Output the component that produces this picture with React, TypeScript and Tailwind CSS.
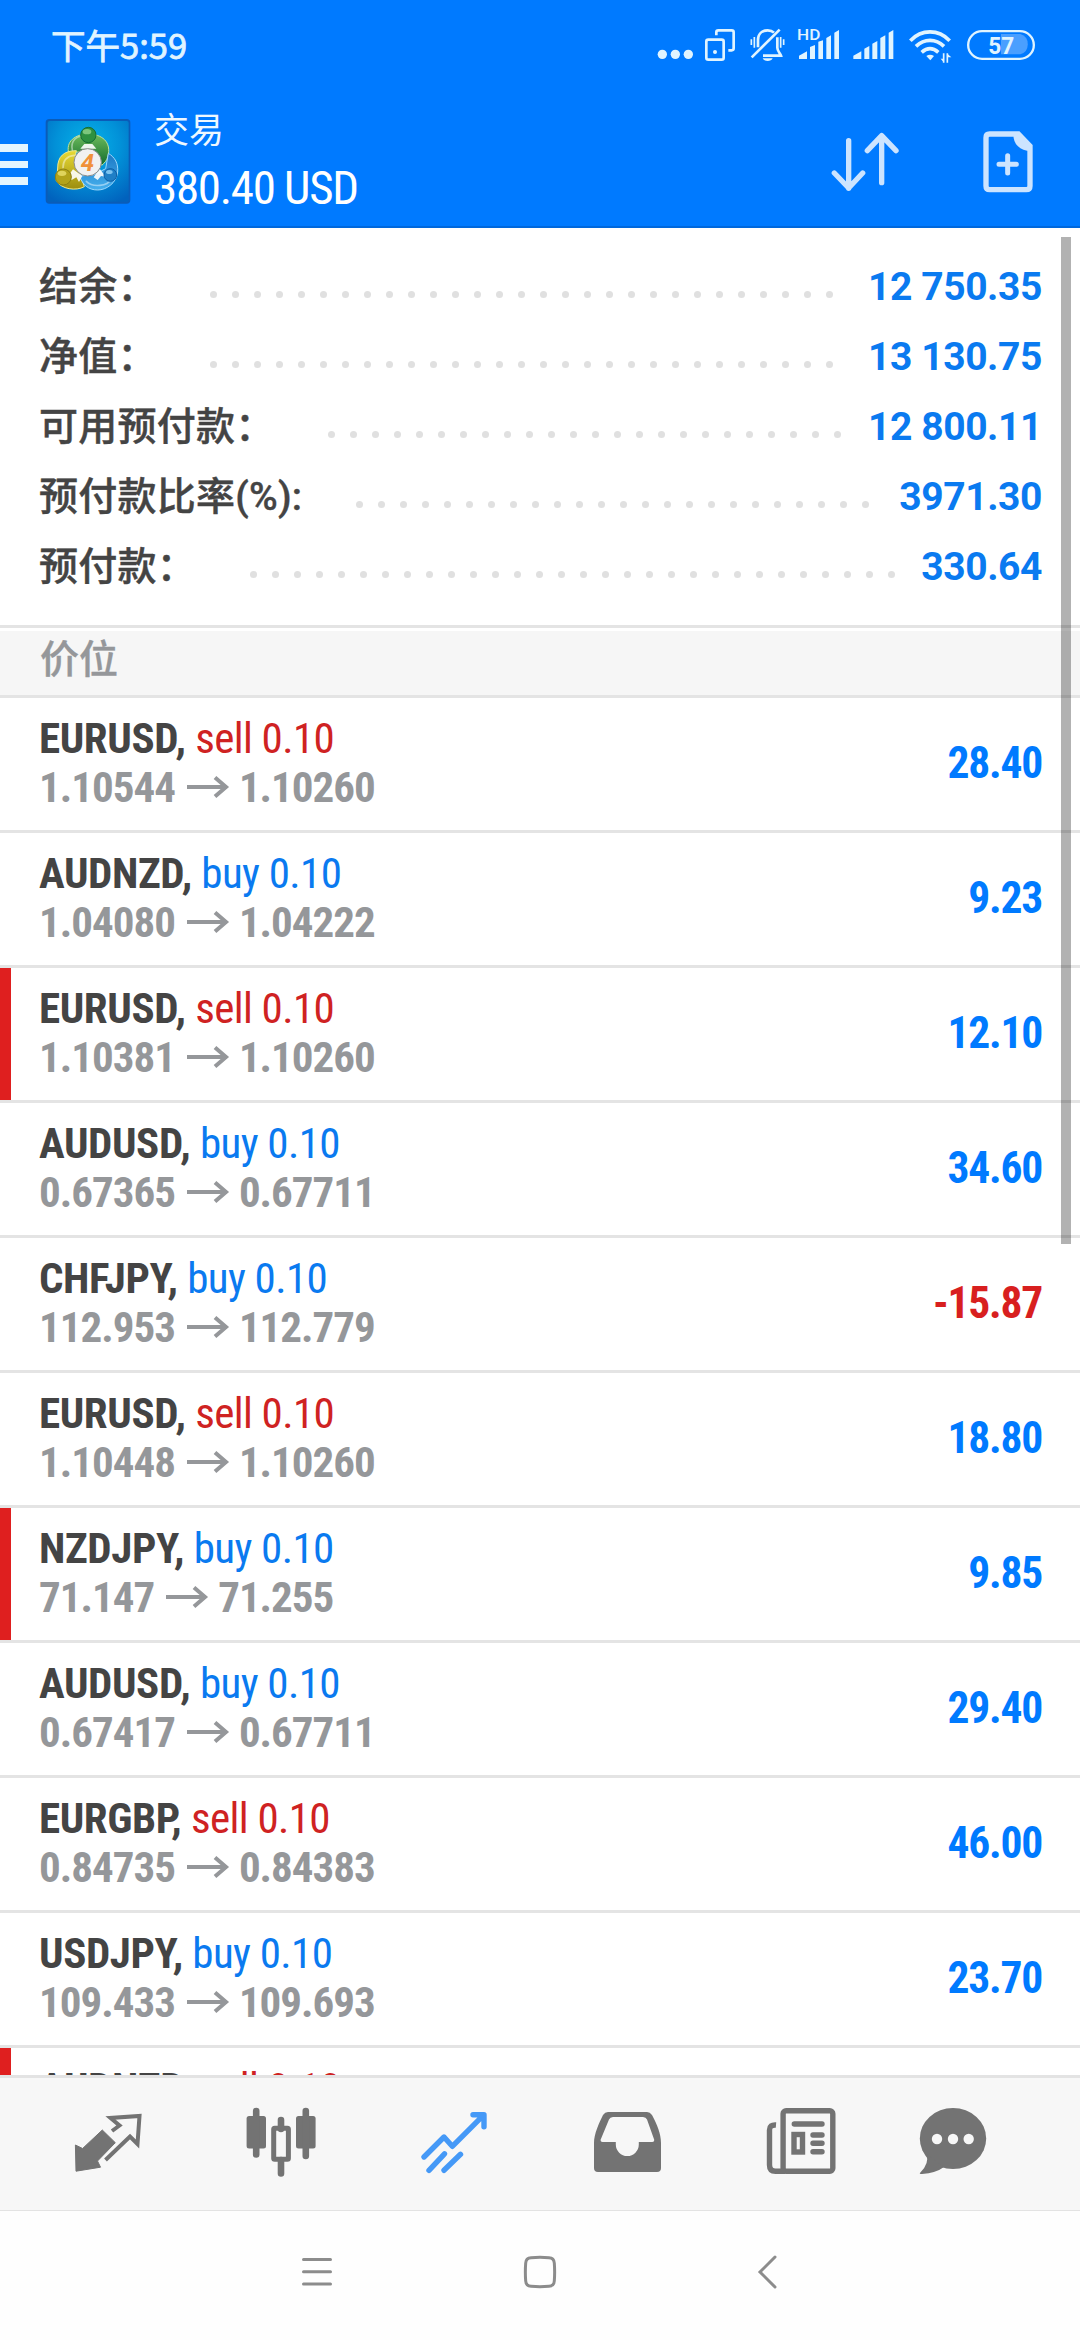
import type { ReactNode } from 'react'

const summary = [
  { label: '结余：', value: '12 750.35', dots: 29 },
  { label: '净值：', value: '13 130.75', dots: 29 },
  { label: '可用预付款：', value: '12 800.11', dots: 24 },
  { label: '预付款比率(%):', value: '3971.30', dots: 24 },
  { label: '预付款：', value: '330.64', dots: 30 },
]

const positions = [
  { symbol: 'EURUSD', side: 'sell', lots: '0.10', open: '1.10544', current: '1.10260', profit: '28.40' },
  { symbol: 'AUDNZD', side: 'buy', lots: '0.10', open: '1.04080', current: '1.04222', profit: '9.23' },
  { symbol: 'EURUSD', side: 'sell', lots: '0.10', open: '1.10381', current: '1.10260', profit: '12.10', marked: true },
  { symbol: 'AUDUSD', side: 'buy', lots: '0.10', open: '0.67365', current: '0.67711', profit: '34.60' },
  { symbol: 'CHFJPY', side: 'buy', lots: '0.10', open: '112.953', current: '112.779', profit: '-15.87' },
  { symbol: 'EURUSD', side: 'sell', lots: '0.10', open: '1.10448', current: '1.10260', profit: '18.80' },
  { symbol: 'NZDJPY', side: 'buy', lots: '0.10', open: '71.147', current: '71.255', profit: '9.85', marked: true },
  { symbol: 'AUDUSD', side: 'buy', lots: '0.10', open: '0.67417', current: '0.67711', profit: '29.40' },
  { symbol: 'EURGBP', side: 'sell', lots: '0.10', open: '0.84735', current: '0.84383', profit: '46.00' },
  { symbol: 'USDJPY', side: 'buy', lots: '0.10', open: '109.433', current: '109.693', profit: '23.70' },
  { symbol: 'AUDNZD', side: 'sell', lots: '0.10', open: '', current: '', profit: '', marked: true },
]

function StatusBar() {
  return (
    <div className="flex h-[91px] justify-between pl-[51px] pr-10 text-[#e0f4ff]">
      <div className="pt-[18.500px] text-[34.500px] leading-[50px] [-webkit-text-stroke:0.8px] font-['Noto_Sans_CJK_SC',sans-serif]">下午5:59</div>
      <div className="flex pt-[26px]">
        <svg width="44" height="40" viewBox="48 78 132 120" fill="currentColor">
          <circle cx="67" cy="163" r="14" />
          <circle cx="106" cy="163" r="14" />
          <circle cx="145" cy="163" r="14" />
        </svg>
        <svg width="43.34" height="40" viewBox="180 78 130 120" fill="none" stroke="currentColor" strokeWidth="8">
          <rect x="199" y="119" width="52" height="60" rx="6" />
          <path d="M229 106v-9q0-6 6-6h40q6 0 6 6v48q0 6-6 6h-10" />
          <circle cx="225" cy="156" r="6" fill="currentColor" stroke="none" />
        </svg>
        <svg width="46.66" height="40" viewBox="310 78 140 120" fill="none" stroke="currentColor" strokeWidth="8">
          <path d="M355 142v-22c0-18 12-29 29-29 8 0 14 2 19 7M413 112v31c0 10 9 17 11 24h-54" />
          <path d="M336 172l84-83" />
          <path d="M335 118v17M344 111v32M432 118v17M423 111v32" strokeWidth="5" />
          <path d="M369 175h30q-4 8-15 8t-15-8z" fill="currentColor" stroke="none" />
        </svg>
        <svg width="56.67" height="40" viewBox="450 78 170 120" fill="currentColor">
          <text x="471" y="120" fontSize="46" fontWeight="500" fontFamily="Roboto, sans-serif" textLength="70" lengthAdjust="spacingAndGlyphs">HD</text>
          <path d="M477 177v-10l24-13v23zM510 177v-36l15-6v42zM535 177v-52l14-4v56zM559 177v-63l14-8v71zM583 177v-79l14-8v87z" />
        </svg>
        <svg width="53.33" height="40" viewBox="620 78 160 120" fill="currentColor">
          <path d="M639 177v-10l24-13v23zM672 177v-31l15-8v39zM696 177v-46l15-8v54zM720 177v-63l15-8v71zM745 177v-79l14-8v87z" />
        </svg>
        <svg width="60" height="40" viewBox="780 78 180 120" fill="none" stroke="currentColor" strokeWidth="11">
          <path d="M811 122c34-35 84-35 118 0M828 139c25-24 59-24 84 0M845 157c16-14 34-14 50 0" />
          <path d="M859 168q11-8 23 0l-11 13z" fill="currentColor" stroke="none" />
          <path d="M911 160v28M922 188v-28" strokeWidth="5" />
          <path d="M902 176l9 11v-11zM934 172l-12-11v11z" fill="currentColor" stroke="none" />
        </svg>
        <svg width="80" height="40" viewBox="960 78 240 120">
          <path d="M1083 102h58a32 32 0 0 1 0 61h-58z" fill="#4a9fff" />
          <rect x="984.500" y="93.500" width="197" height="83" rx="41.500" fill="none" stroke="currentColor" strokeWidth="7" />
          <text x="1045" y="161" fill="currentColor" fontSize="72" fontWeight="700" fontFamily="Roboto, sans-serif" textLength="78" lengthAdjust="spacingAndGlyphs">57</text>
        </svg>
      </div>
    </div>
  )
}

function Logo() {
  return (
    <svg width="86" height="87" viewBox="0 0 258 261" className="ml-[17px]">
      <defs>
        <radialGradient id="tile" cx="0.5" cy="0.3" r="0.8">
          <stop offset="0" stopColor="#06b4ea" />
          <stop offset="0.5" stopColor="#0291d8" />
          <stop offset="1" stopColor="#0162bd" />
        </radialGradient>
        <linearGradient id="green" x1="0" y1="0" x2="0" y2="1">
          <stop offset="0" stopColor="#6fbd5c" />
          <stop offset="1" stopColor="#116b2e" />
        </linearGradient>
        <linearGradient id="yellow" x1="0" y1="0" x2="0" y2="1">
          <stop offset="0" stopColor="#e8da34" />
          <stop offset="1" stopColor="#9c8d10" />
        </linearGradient>
        <linearGradient id="sky" x1="0" y1="0" x2="0" y2="1">
          <stop offset="0" stopColor="#1c78c4" />
          <stop offset="1" stopColor="#46b0ee" />
        </linearGradient>
      </defs>
      <rect x="2" y="3" width="254" height="254" rx="11" fill="#0a5cb8" />
      <rect x="8" y="9" width="243" height="242" rx="6" fill="url(#tile)" />
      <g strokeLinejoin="round">
        <path d="M72 108C60 70 92 48 130 48s72 22 58 70c-2 8-10 18-18 24l-30-40H94z" fill="url(#green)" stroke="#c2e29a" strokeWidth="3" />
        <path d="M94 98C56 98 38 116 38 150c0 16-6 26-4 38 14 26 60 32 84 18l-16-48-14-28z" fill="url(#yellow)" stroke="#f1e98c" strokeWidth="3" />
        <path d="M190 106c20 12 30 30 28 56-4 34-34 54-60 54-28 0-46-16-54-42l44-4 34-18z" fill="url(#sky)" stroke="#9fd8fb" strokeWidth="3" />
      </g>
      <path d="M82 96c-6-30 14-42 34-42M54 150c0-22 12-36 34-38M124 190c20 20 64 14 74-6" fill="none" stroke="#fff" strokeOpacity="0.45" strokeWidth="5" strokeLinecap="round" />
      <path d="M68 176l16-22 28 20-10 18-8-14-14 8zM146 178l18-26 18 24-14-2-10 12zM106 92l12-14h24l12 14z" fill="#fff" opacity="0.9" />
      <circle cx="130" cy="51" r="23" fill="#2f9140" stroke="#176c33" strokeWidth="3" />
      <ellipse cx="126" cy="41" rx="13" ry="8" fill="#7cc67c" />
      <circle cx="55" cy="177" r="24" fill="#b3a31a" stroke="#8d7f12" strokeWidth="3" />
      <ellipse cx="51" cy="166" rx="13" ry="8" fill="#e0d45c" />
      <circle cx="196" cy="171" r="19" fill="#1f7fc6" stroke="#0d5da5" strokeWidth="3" />
      <ellipse cx="193" cy="162" rx="10" ry="6" fill="#7cc3f0" />
      <circle cx="128" cy="133" r="41" fill="#f1f1f1" stroke="#8c8c8c" strokeWidth="3" />
      <text x="127" y="158" textAnchor="middle" fontSize="72" fontWeight="700" fontStyle="italic" fill="#f0913a" fontFamily="Roboto, sans-serif">4</text>
    </svg>
  )
}

function Header() {
  return (
    <header className="h-[228px] border-b-2 border-[#0068dc] bg-[#007aff]">
      <StatusBar />
      <div className="flex h-[135px] items-start text-white">
        <div className="mt-[53px] flex w-7 flex-col gap-[9px]">
          <div className="h-[7.500px] bg-[#e3f5ff]" />
          <div className="h-[7.500px] bg-[#e3f5ff]" />
          <div className="h-[7.500px] bg-[#e3f5ff]" />
        </div>
        <div className="mt-[27px]">
          <Logo />
        </div>
        <div className="ml-[23px] flex flex-col">
          <div className="mt-[12px] text-[35px] leading-[50px] text-[#eef8ff] font-['Noto_Sans_CJK_SC',sans-serif]">交易</div>
          <div className="mt-[7px] text-[47px] leading-[56px] tracking-[-1.3px] [font-stretch:75%]">380.40 USD</div>
        </div>
        <div className="grow" />
        <svg width="68" height="60" viewBox="573 395 204 180" className="mt-[41px]" fill="none" stroke="#cce4ff" strokeWidth="16" strokeLinecap="round" strokeLinejoin="round">
          <path d="M626 421v143M583 518l43 45 42-45M725 547V406M682 451l43-45 43 45" />
        </svg>
        <svg width="50" height="62" viewBox="1030 394 150 186" className="mr-[47px] ml-[84px] mt-[40px]" fill="none" stroke="#cce4ff" strokeWidth="16">
          <path d="M1050 403h86l35 36v120q0 11-11 11h-110q-11 0-11-11V414q0-11 11-11z" />
          <path d="M1121 402h17l38 38v13h-14q-41-8-41-51z" fill="#cce4ff" stroke="none" />
          <path d="M1078 494h52M1104 468v52" strokeWidth="15" strokeLinecap="round" />
        </svg>
      </div>
    </header>
  )
}

function SummaryRow({ label, value, dots }: { label: string; value: string; dots: number }) {
  return (
    <div className="flex h-[70px] items-center">
      <div className="text-[39px] font-medium tracking-[0.25px] text-[#444] [-webkit-text-stroke:0.4px]">{label}</div>
      <div className="mt-[14px] ml-[53.500px] flex gap-[15px]">
        {Array.from({ length: dots }, (_, i) => (
          <span key={i} className="size-[7px] rounded-full bg-[#e0e0e0]" />
        ))}
      </div>
      <div className="ml-auto text-[39px] font-bold tracking-[-0.4px] text-[#0a7af0]">{value}</div>
    </div>
  )
}

function Position({ p }: { p: (typeof positions)[number] }) {
  return (
    <div className="flex h-[135px] shrink-0 border-b-[3px] border-[#e4e4e4]">
      <div className={p.marked ? 'w-[11px] bg-[#df1f1f]' : 'w-[11px]'} />
      <div className="ml-[28px] flex grow flex-col pt-[16px] text-[43px] leading-[48px] [font-stretch:75%]">
        <div className="tracking-[-0.6px] whitespace-pre">
          <span className="font-bold tracking-[-0.4px] text-[#444]">{p.symbol}, </span>
          <span className={p.side === 'sell' ? 'text-[#cf2222]' : 'text-[#0a7af0]'}>
            {p.side} {p.lots}
          </span>
        </div>
        {p.open && (
          <div className="mt-px flex items-center font-bold tracking-[-1px] text-[#95979a]">
            {p.open}
            <svg width="43" height="22" viewBox="0 0 43 22" className="mr-[9px] ml-[12px]" fill="none" stroke="currentColor" strokeWidth="4">
              <path d="M0 11h40M28 1.500L39 11 28 20.500" />
            </svg>
            {p.current}
          </div>
        )}
      </div>
      <div className={`mr-[38px] self-center text-[43.500px] leading-[48px] font-bold tracking-[-1.200px] [font-stretch:75%] ${p.profit.startsWith('-') ? 'text-[#d81f1f]' : 'text-[#007aff]'}`}>
        {p.profit}
      </div>
    </div>
  )
}

function Tab({ children }: { children: ReactNode }) {
  return <div className="flex w-[173.400px] items-center justify-center">{children}</div>
}

function TabBar() {
  return (
    <nav className="flex h-[136px] shrink-0 border-t-[3px] border-b border-[#e3e3e3] bg-[#f7f7f7] pb-1 pl-[21px] text-[#737373]">
      <Tab>
        <svg width="76" height="68" viewBox="70 2108 76 68" fill="currentColor">
          <path d="M112 2131l7.500-5.500-9-7.500 29-2-2 28-7.500-7.500-24.500 23.500" fill="none" stroke="currentColor" strokeWidth="4" />
          <path d="M102.300 2130l13 12.700-17.800 18.300 3 6.200-24.500 4-.6-26.200 7.200 3.500z" stroke="currentColor" strokeLinejoin="round" />
        </svg>
      </Tab>
      <Tab>
        <svg width="70" height="70" viewBox="0 0 70 70" fill="currentColor">
          <rect x="0.600" y="9" width="19.400" height="32.500" rx="2.500" />
          <rect x="6.900" y="0.700" width="6.600" height="50" rx="3.300" />
          <rect x="27.700" y="21.300" width="14.700" height="31" rx="1" fill="none" stroke="currentColor" strokeWidth="5" />
          <path d="M35 22v-9M35 53v13.500" fill="none" stroke="currentColor" strokeWidth="6.600" strokeLinecap="round" />
          <rect x="50" y="9" width="19.600" height="32.500" rx="2.500" />
          <rect x="56.500" y="0.700" width="6.600" height="51.500" rx="3.300" />
        </svg>
      </Tab>
      <Tab>
        <svg width="68" height="66" viewBox="0 -1 68 66" fill="none" stroke="#4599f7" strokeWidth="5.400" strokeLinecap="round" strokeLinejoin="round">
          <path d="M4 47l20-20 8.300 9.300 31-31M53 4.700h11v12M9 60.300l15.500-16.500M24 60.300l16.500-16" />
        </svg>
      </Tab>
      <Tab>
        <svg width="69" height="66" viewBox="0 -1 69 66" fill="currentColor" fillRule="evenodd">
          <path d="M15 2h39q3 0 5 3c5 9 9 19 9 28v25q0 4-4 4H5q-4 0-4-4V33C1 24 6 13 10 5q2-3 5-3zM20 7q-3 0-4 2.500L7.500 30q0 2 2 2h13.300v2.500a11.500 11.500 0 0 0 23 0V32h13.500q2 0 2-2L54 9.500Q53 7 50 7z" />
        </svg>
      </Tab>
      <Tab>
        <svg width="71" height="70" viewBox="0 0 71 70" fill="none" stroke="currentColor" strokeWidth="5.400">
          <rect x="17.100" y="3.700" width="49.700" height="60.500" rx="3" />
          <path d="M10 18Q3.500 17.500 3.500 23v35q0 6.300 6 6.300h10" />
          <path d="M28.300 17h27.700M47 28h9M47 36.300h9M47 44.700h9" strokeLinecap="round" />
          <rect x="28" y="27.500" width="8.500" height="17.500" />
        </svg>
      </Tab>
      <div className="flex w-[131px] items-center justify-center">
        <svg width="68" height="70" viewBox="0 0 68 70" fill="currentColor">
          <ellipse cx="34" cy="31.500" rx="33.200" ry="30.500" />
          <path d="M7 47q4 9-6 19-1 1 2 1 14-1 22-7z" />
          <g fill="#f7f7f7">
            <circle cx="18" cy="32" r="5.200" />
            <circle cx="34" cy="32" r="5.200" />
            <circle cx="49.700" cy="32" r="5.200" />
          </g>
        </svg>
      </div>
    </nav>
  )
}

function SystemNav() {
  return (
    <div className="flex h-[129px] shrink-0 items-center bg-[#fefefe] pb-[7px] pl-[301px]">
      <svg width="32" height="32" viewBox="0 0 32 32" fill="none" stroke="#8c8c8c" strokeWidth="3" strokeLinecap="round">
        <path d="M2.500 3.500h27M2.500 15.800h27M2.500 28h27" />
      </svg>
      <svg width="34" height="34" viewBox="0 0 34 34" className="ml-[190px]" fill="none" stroke="#8c8c8c" strokeWidth="3">
        <path d="M8 2.700Q17 2 26 2.700q5 .3 5.300 5.300.7 9 0 18-.3 5-5.300 5.300-9 .7-18 0-5-.3-5.300-5.300-.7-9 0-18Q3 3 8 2.700z" />
      </svg>
      <svg width="20" height="34" viewBox="0 0 20 34" className="ml-[200px]" fill="none" stroke="#8c8c8c" strokeWidth="3" strokeLinecap="round">
        <path d="M18 2L3 17l15 15" />
      </svg>
    </div>
  )
}

export default function App() {
  return (
    <div className="relative flex h-[2340px] w-[1080px] flex-col overflow-hidden bg-white font-[Roboto,'Noto_Sans_CJK_SC',sans-serif]">
      <Header />
      <main className="flex h-[1847px] shrink-0 flex-col overflow-hidden">
        <section className="h-[400px] shrink-0 border-b-[3px] border-[#e4e4e4] pt-[24px] pr-[38px] pl-[39px]">
          {summary.map(row => (
            <SummaryRow key={row.label} {...row} />
          ))}
        </section>
        <div className="mt-[3px] h-[67px] shrink-0 border-b-[3px] border-[#e4e4e4] bg-[#f6f6f6] pl-[40px] text-[39px] leading-[58px] font-medium text-[#95979a] [-webkit-text-stroke:0.4px]">
          价位
        </div>
        {positions.map((p, i) => (
          <Position key={i} p={p} />
        ))}
      </main>
      <TabBar />
      <SystemNav />
      {/* scroll indicator floats over the list */}
      <div className="absolute top-[237px] right-[9px] h-[1007px] w-[10px] bg-black/30" />
    </div>
  )
}
